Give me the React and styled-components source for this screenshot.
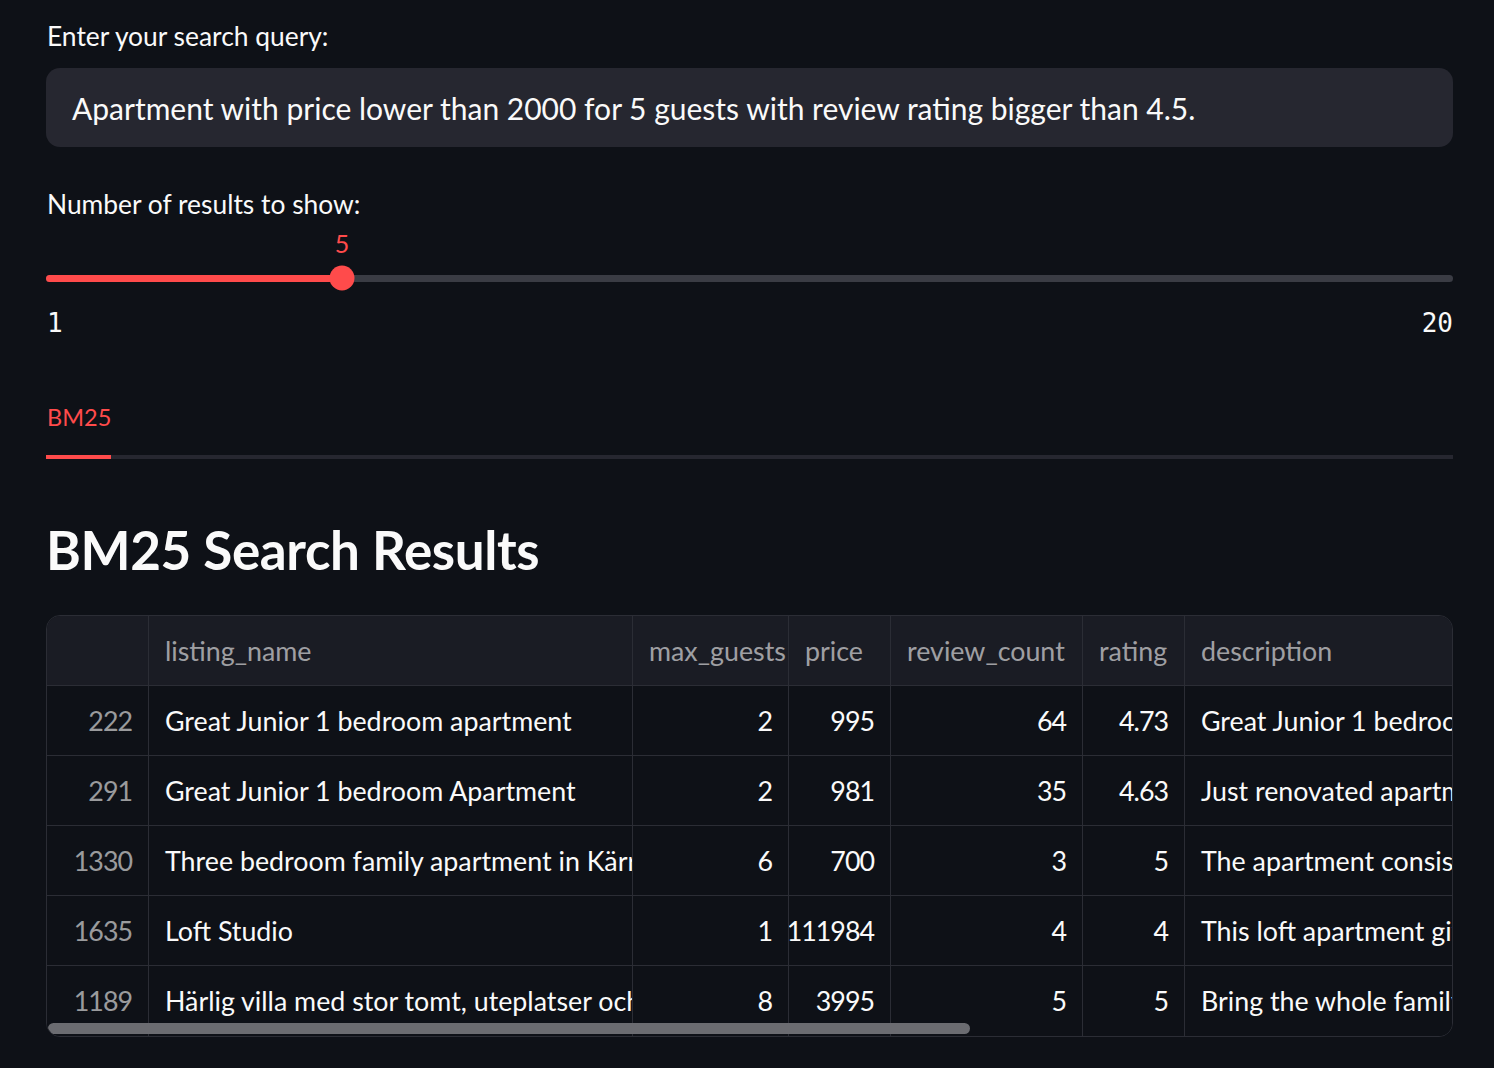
import styled, { createGlobalStyle } from 'styled-components'

const GlobalStyle = createGlobalStyle`
	html, body {
		margin: 0;
		padding: 0;
		background: #0e1117;
	}
	body {
		font-family: Lato, 'Noto Sans', sans-serif;
		color: #fafafa;
	}
`

const Page = styled.div`
	width: 1494px;
	height: 1068px;
	box-sizing: border-box;
	padding: 20px 41px 0 46px;
	background: #0e1117;
	overflow: hidden;
`

const Label = styled.div`
	font-size: 26.4px;
	line-height: 32px;
	padding-left: 1px;
	color: #fafafa;
`

const Input = styled.div`
	margin-top: 16px;
	height: 79px;
	border-radius: 14px;
	background: #262730;
	display: flex;
	align-items: center;
	padding: 0 26px;
	font-size: 30px;
	color: #fafafa;
`

const SliderBlock = styled.div`
	margin-top: 41px;
	display: flex;
	flex-direction: column;
`

const SliderValue = styled.div`
	margin-top: 8px;
	height: 30px;
	font-size: 25px;
	color: #ff4b4b;
	position: relative;

	span {
		position: absolute;
		left: 296px;
		transform: translateX(-50%);
		top: 0;
	}
`

const Track = styled.div`
	margin-top: 8px;
	height: 24px;
	display: flex;
	align-items: center;
	position: relative;
`

const Rail = styled.div`
	flex: 1;
	height: 7px;
	border-radius: 4px;
	background: #3a3c44;
	position: relative;
`

const Fill = styled.div`
	height: 100%;
	border-radius: 4px;
	background: #ff4b4b;
`

const Thumb = styled.div`
	position: absolute;
	top: 50%;
	width: 25px;
	height: 25px;
	border-radius: 50%;
	background: #ff4b4b;
	transform: translate(-50%, -50%);
`

const Ticks = styled.div`
	margin-top: 17px;
	display: flex;
	justify-content: space-between;
	font-family: 'DejaVu Sans Mono', 'Liberation Mono', monospace;
	font-size: 26px;
	line-height: 32px;
	color: #fafafa;
	padding-left: 1px;
`

const Tabs = styled.div`
	margin-top: 64px;
	border-bottom: 4px solid #262730;
	display: flex;
`

const Tab = styled.div`
	font-size: 23.5px;
	color: ${p => (p.active ? '#ff4b4b' : '#fafafa')};
	padding: 0 0 24px 1px;
	margin-bottom: -4px;
	border-bottom: 4px solid ${p => (p.active ? '#ff4b4b' : 'transparent')};
`

const Heading = styled.h2`
	margin: 61px 0 0;
	font-size: 53px;
	font-weight: 700;
	line-height: 60px;
	color: #fafafa;
	letter-spacing: -0.4px;
`

const TableFrame = styled.div`
	margin-top: 35px;
	position: relative;
	border: 1px solid #2b2d35;
	border-radius: 14px;
	overflow: hidden;
	height: 420px;
`

const Row = styled.div`
	display: grid;
	grid-template-columns: 102px 484px 156px 102px 192px 102px 600px;
	height: 70px;
	background: ${p => (p.header ? '#1a1c24' : '#0e1117')};
	border-bottom: ${p => (p.last ? 'none' : '1px solid #2b2d35')};
	box-sizing: border-box;
`

const Cell = styled.div`
	display: flex;
	align-items: center;
	justify-content: ${p => (p.right ? 'flex-end' : 'flex-start')};
	padding: 0 16px;
	border-right: 1px solid #2b2d35;
	overflow: hidden;
	white-space: nowrap;
	font-size: 26.8px;
	letter-spacing: ${p => (p.right ? '-1px' : '0')};
	color: ${p => (p.muted ? 'rgba(250, 250, 250, 0.6)' : '#fafafa')};
	min-width: 0;
`

const Scrollbar = styled.div`
	position: absolute;
	left: 1px;
	bottom: 2px;
	width: 922px;
	height: 11px;
	border-radius: 6px;
	background: #6b6c71;
`

const columns = ['', 'listing_name', 'max_guests', 'price', 'review_count', 'rating', 'description']

const rows = [
	[222, 'Great Junior 1 bedroom apartment', 2, 995, 64, '4.73', 'Great Junior 1 bedroom apartment'],
	[291, 'Great Junior 1 bedroom Apartment', 2, 981, 35, '4.63', 'Just renovated apartment'],
	[1330, 'Three bedroom family apartment in Kärrtorp', 6, 700, 3, 5, 'The apartment consists of'],
	[1635, 'Loft Studio', 1, 111984, 4, 4, 'This loft apartment gives'],
	[1189, 'Härlig villa med stor tomt, uteplatser och pool', 8, 3995, 5, 5, 'Bring the whole family']
]

export default function App() {
	return (
		<>
			<GlobalStyle />
			<Page>
				<Label>Enter your search query:</Label>
				<Input>Apartment with price lower than 2000 for 5 guests with review rating bigger than 4.5.</Input>

				<SliderBlock>
					<Label>Number of results to show:</Label>
					<SliderValue>
						<span>5</span>
					</SliderValue>
					<Track>
						<Rail>
							<Fill style={{ width: `${((5 - 1) / 19) * 100}%` }} />
							<Thumb style={{ left: `${((5 - 1) / 19) * 100}%` }} />
						</Rail>
					</Track>
					<Ticks>
						<span>1</span>
						<span>20</span>
					</Ticks>
				</SliderBlock>

				<Tabs>
					<Tab active>BM25</Tab>
				</Tabs>

				<Heading>BM25 Search Results</Heading>

				<TableFrame>
					<Row header>
						{columns.map((c, i) => (
							<Cell key={i} muted>
								{c}
							</Cell>
						))}
					</Row>
					{rows.map((r, ri) => (
						<Row key={r[0]} last={ri === rows.length - 1}>
							<Cell right muted>{r[0]}</Cell>
							<Cell>{r[1]}</Cell>
							<Cell right>{r[2]}</Cell>
							<Cell right>{r[3]}</Cell>
							<Cell right>{r[4]}</Cell>
							<Cell right>{r[5]}</Cell>
							<Cell>{r[6]}</Cell>
						</Row>
					))}
					<Scrollbar />
				</TableFrame>
			</Page>
		</>
	)
}
